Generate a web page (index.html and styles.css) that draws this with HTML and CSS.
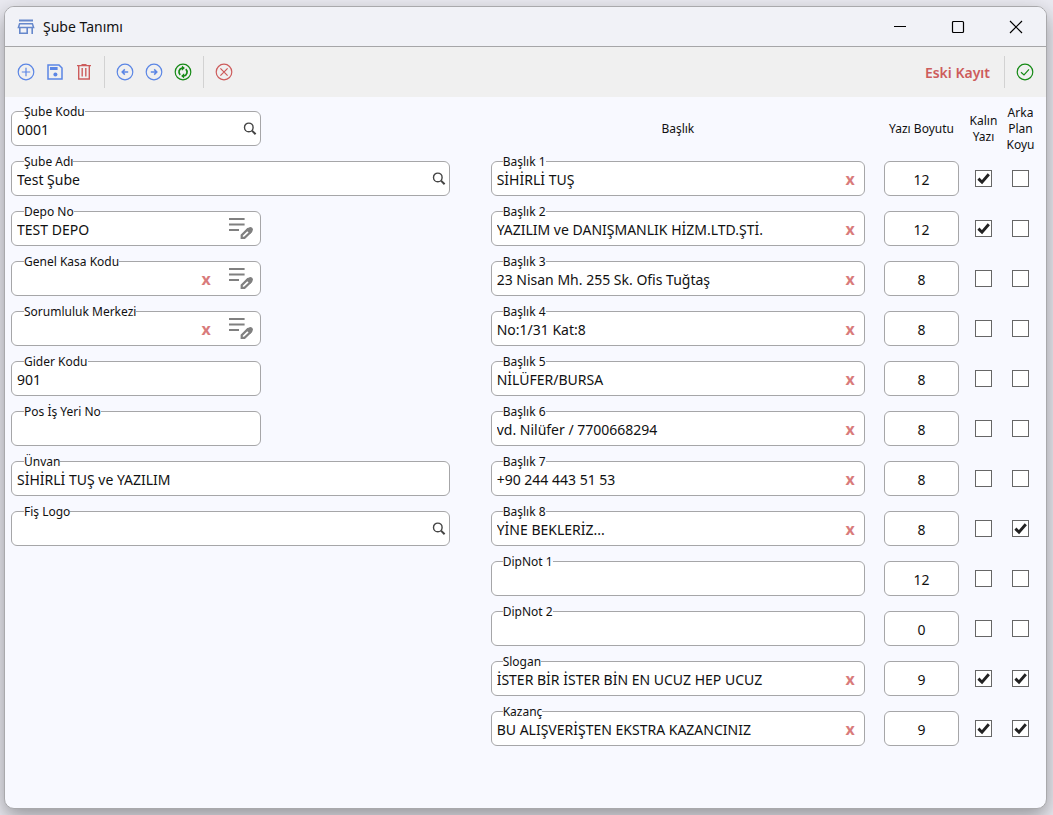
FILE: index.html
```html
<!DOCTYPE html>
<html lang="tr">
<head>
    <meta charset="UTF-8">
    <meta name="viewport" content="width=device-width, initial-scale=1.0">
    <title>Şube Tanımı</title>
    <link rel="stylesheet" href="styles.css">
</head>
<body>
    <svg class="icon-defs" aria-hidden="true">
        <symbol id="icon-search" viewBox="0 0 14 14">
            <circle cx="5.8" cy="5.4" r="4.3" fill="none" stroke="currentColor" stroke-width="1.4"/>
            <path d="M9 8.6L12.6 12.2" fill="none" stroke="currentColor" stroke-width="2"/>
        </symbol>
        <symbol id="icon-edit" viewBox="0 0 26 24">
            <path d="M1 2H16.6M1 7.5H16.6M1 13H11" fill="none" stroke="currentColor" stroke-width="2"/>
            <path d="M13.7 20.9V18.2L19.6 12.4L22.4 15.2L16.5 20.9Z" fill="none" stroke="currentColor" stroke-width="2.2"/>
            <path d="M17.8 12.6L20.8 10.4Q22.4 9.4 23.8 10.4L24.4 11Q25.6 12.6 24.4 14.2L22 17Z" fill="currentColor"/>
        </symbol>
    </svg>

    <div class="window">
        <header class="titlebar">
            <svg class="app-icon" width="18" height="16" viewBox="0 0 18 16" fill="none" stroke="currentColor">
                <path d="M2 1.5H16" stroke-width="2"/>
                <path d="M2.6 4.8H15.4L16.6 8.6H1.4Z" stroke-width="1.5"/>
                <path d="M2.8 8.6V14.2H10.2V8.6M15.2 8.6V15" stroke-width="1.6"/>
            </svg>
            <h1>Şube Tanımı</h1>
            <div class="window-buttons">
                <button type="button" aria-label="Simge durumuna küçült">
                    <svg width="14" height="14" viewBox="0 0 14 14"><path d="M1 6.5H13"/></svg>
                </button>
                <button type="button" aria-label="Ekranı kapla">
                    <svg width="14" height="14" viewBox="0 0 14 14"><rect x="1.5" y="1.5" width="11" height="11" rx="1"/></svg>
                </button>
                <button type="button" aria-label="Kapat">
                    <svg width="14" height="14" viewBox="0 0 14 14"><path d="M1 1L13 13M13 1L1 13"/></svg>
                </button>
            </div>
        </header>

        <div class="toolbar">
            <button type="button" class="tool blue" aria-label="Yeni">
                <svg viewBox="0 0 18 18"><circle cx="9" cy="9" r="7.8"/><path d="M9 4.8V13.2M4.8 9H13.2"/></svg>
            </button>
            <button type="button" class="tool blue" aria-label="Kaydet">
                <svg viewBox="0 0 18 18"><path d="M2 2H13L16 5V16H2Z" stroke-width="1.5"/><path d="M4 5.6H11.6" stroke-width="3"/><circle cx="9.4" cy="11.6" r="2" fill="currentColor" stroke="none"/></svg>
            </button>
            <button type="button" class="tool red" aria-label="Sil">
                <svg viewBox="0 0 18 18"><path d="M2 2.6H16M6.5 1.6H11.5M3.7 2.6V16H14.3V2.6M7.2 5V13.4M10.8 5V13.4" stroke-width="1.4"/></svg>
            </button>
            <span class="separator"></span>
            <button type="button" class="tool blue" aria-label="Önceki">
                <svg viewBox="0 0 18 18"><circle cx="9" cy="9" r="7.8"/><path d="M12.2 9H6.6M8.8 6.4L6.2 9L8.8 11.6" stroke-width="1.5"/></svg>
            </button>
            <button type="button" class="tool blue" aria-label="Sonraki">
                <svg viewBox="0 0 18 18"><circle cx="9" cy="9" r="7.8"/><path d="M5.8 9H11.4M9.2 6.4L11.8 9L9.2 11.6" stroke-width="1.5"/></svg>
            </button>
            <button type="button" class="tool green" aria-label="Yenile">
                <svg viewBox="0 0 18 18"><circle cx="9" cy="9" r="7.8"/><path d="M8.6 5.1H8.2A3.9 3.9 0 0 0 6.2 11.8M9.4 12.9H9.8A3.9 3.9 0 0 0 11.8 6.2" stroke-width="1.7"/><path d="M7.9 2.4L10.9 5.1L7.9 7.8ZM10.1 10.2L7.1 12.9L10.1 15.6Z" fill="currentColor" stroke="none"/></svg>
            </button>
            <span class="separator"></span>
            <button type="button" class="tool red" aria-label="İptal">
                <svg viewBox="0 0 18 18"><circle cx="9" cy="9" r="7.8"/><path d="M5.4 5.4L12.6 12.6M12.6 5.4L5.4 12.6"/></svg>
            </button>
            <strong class="record-status">Eski Kayıt</strong>
            <span class="separator"></span>
            <button type="button" class="tool green" aria-label="Onayla">
                <svg viewBox="0 0 18 18"><circle cx="9" cy="9" r="7.8"/><path d="M5 9.2L8 12L13 6.4"/></svg>
            </button>
        </div>

        <form class="content">
            <div class="branch-fields">
                <div class="field short">
                    <label for="subeKodu">Şube Kodu</label>
                    <input type="text" id="subeKodu" value="0001">
                    <button type="button" class="search" aria-label="Şube kodu ara"><svg><use href="#icon-search"/></svg></button>
                </div>
                <div class="field">
                    <label for="subeAdi">Şube Adı</label>
                    <input type="text" id="subeAdi" value="Test Şube">
                    <button type="button" class="search" aria-label="Şube adı ara"><svg><use href="#icon-search"/></svg></button>
                </div>
                <div class="field short">
                    <label for="depoNo">Depo No</label>
                    <input type="text" id="depoNo" value="TEST DEPO">
                    <button type="button" class="edit" aria-label="Depo seç"><svg><use href="#icon-edit"/></svg></button>
                </div>
                <div class="field short">
                    <label for="kasaKodu">Genel Kasa Kodu</label>
                    <input type="text" id="kasaKodu">
                    <button type="button" class="clear">x</button>
                    <button type="button" class="edit" aria-label="Kasa seç"><svg><use href="#icon-edit"/></svg></button>
                </div>
                <div class="field short">
                    <label for="sorumluluk">Sorumluluk Merkezi</label>
                    <input type="text" id="sorumluluk">
                    <button type="button" class="clear">x</button>
                    <button type="button" class="edit" aria-label="Sorumluluk merkezi seç"><svg><use href="#icon-edit"/></svg></button>
                </div>
                <div class="field short">
                    <label for="giderKodu">Gider Kodu</label>
                    <input type="text" id="giderKodu" value="901">
                </div>
                <div class="field short">
                    <label for="posNo">Pos İş Yeri No</label>
                    <input type="text" id="posNo">
                </div>
                <div class="field">
                    <label for="unvan">Ünvan</label>
                    <input type="text" id="unvan" value="SİHİRLİ TUŞ ve YAZILIM">
                </div>
                <div class="field">
                    <label for="fisLogo">Fiş Logo</label>
                    <input type="text" id="fisLogo">
                    <button type="button" class="search" aria-label="Logo ara"><svg><use href="#icon-search"/></svg></button>
                </div>
            </div>

            <table class="receipt-lines">
                <thead>
                    <tr>
                        <th class="col-title">Başlık</th>
                        <th class="col-size">Yazı Boyutu</th>
                        <th class="col-check">Kalın Yazı</th>
                        <th class="col-check">Arka Plan Koyu</th>
                    </tr>
                </thead>
                <tbody>
                    <tr>
                        <td><div class="field"><label for="baslik1">Başlık 1</label><input type="text" id="baslik1" value="SİHİRLİ TUŞ"><button type="button" class="clear">x</button></div></td>
                        <td class="size"><input type="text" value="12" aria-label="Başlık 1 yazı boyutu"></td>
                        <td class="check"><input type="checkbox" aria-label="Başlık 1 kalın" checked></td>
                        <td class="check"><input type="checkbox" aria-label="Başlık 1 koyu"></td>
                    </tr>
                    <tr>
                        <td><div class="field"><label for="baslik2">Başlık 2</label><input type="text" id="baslik2" value="YAZILIM ve DANIŞMANLIK HİZM.LTD.ŞTİ."><button type="button" class="clear">x</button></div></td>
                        <td class="size"><input type="text" value="12" aria-label="Başlık 2 yazı boyutu"></td>
                        <td class="check"><input type="checkbox" aria-label="Başlık 2 kalın" checked></td>
                        <td class="check"><input type="checkbox" aria-label="Başlık 2 koyu"></td>
                    </tr>
                    <tr>
                        <td><div class="field"><label for="baslik3">Başlık 3</label><input type="text" id="baslik3" value="23 Nisan Mh. 255 Sk. Ofis Tuğtaş"><button type="button" class="clear">x</button></div></td>
                        <td class="size"><input type="text" value="8" aria-label="Başlık 3 yazı boyutu"></td>
                        <td class="check"><input type="checkbox" aria-label="Başlık 3 kalın"></td>
                        <td class="check"><input type="checkbox" aria-label="Başlık 3 koyu"></td>
                    </tr>
                    <tr>
                        <td><div class="field"><label for="baslik4">Başlık 4</label><input type="text" id="baslik4" value="No:1/31 Kat:8"><button type="button" class="clear">x</button></div></td>
                        <td class="size"><input type="text" value="8" aria-label="Başlık 4 yazı boyutu"></td>
                        <td class="check"><input type="checkbox" aria-label="Başlık 4 kalın"></td>
                        <td class="check"><input type="checkbox" aria-label="Başlık 4 koyu"></td>
                    </tr>
                    <tr>
                        <td><div class="field"><label for="baslik5">Başlık 5</label><input type="text" id="baslik5" value="NİLÜFER/BURSA"><button type="button" class="clear">x</button></div></td>
                        <td class="size"><input type="text" value="8" aria-label="Başlık 5 yazı boyutu"></td>
                        <td class="check"><input type="checkbox" aria-label="Başlık 5 kalın"></td>
                        <td class="check"><input type="checkbox" aria-label="Başlık 5 koyu"></td>
                    </tr>
                    <tr>
                        <td><div class="field"><label for="baslik6">Başlık 6</label><input type="text" id="baslik6" value="vd. Nilüfer / 7700668294"><button type="button" class="clear">x</button></div></td>
                        <td class="size"><input type="text" value="8" aria-label="Başlık 6 yazı boyutu"></td>
                        <td class="check"><input type="checkbox" aria-label="Başlık 6 kalın"></td>
                        <td class="check"><input type="checkbox" aria-label="Başlık 6 koyu"></td>
                    </tr>
                    <tr>
                        <td><div class="field"><label for="baslik7">Başlık 7</label><input type="text" id="baslik7" value="+90 244 443 51 53"><button type="button" class="clear">x</button></div></td>
                        <td class="size"><input type="text" value="8" aria-label="Başlık 7 yazı boyutu"></td>
                        <td class="check"><input type="checkbox" aria-label="Başlık 7 kalın"></td>
                        <td class="check"><input type="checkbox" aria-label="Başlık 7 koyu"></td>
                    </tr>
                    <tr>
                        <td><div class="field"><label for="baslik8">Başlık 8</label><input type="text" id="baslik8" value="YİNE BEKLERİZ..."><button type="button" class="clear">x</button></div></td>
                        <td class="size"><input type="text" value="8" aria-label="Başlık 8 yazı boyutu"></td>
                        <td class="check"><input type="checkbox" aria-label="Başlık 8 kalın"></td>
                        <td class="check"><input type="checkbox" aria-label="Başlık 8 koyu" checked></td>
                    </tr>
                    <tr>
                        <td><div class="field"><label for="dipnot1">DipNot 1</label><input type="text" id="dipnot1"></div></td>
                        <td class="size"><input type="text" value="12" aria-label="DipNot 1 yazı boyutu"></td>
                        <td class="check"><input type="checkbox" aria-label="DipNot 1 kalın"></td>
                        <td class="check"><input type="checkbox" aria-label="DipNot 1 koyu"></td>
                    </tr>
                    <tr>
                        <td><div class="field"><label for="dipnot2">DipNot 2</label><input type="text" id="dipnot2"></div></td>
                        <td class="size"><input type="text" value="0" aria-label="DipNot 2 yazı boyutu"></td>
                        <td class="check"><input type="checkbox" aria-label="DipNot 2 kalın"></td>
                        <td class="check"><input type="checkbox" aria-label="DipNot 2 koyu"></td>
                    </tr>
                    <tr>
                        <td><div class="field"><label for="slogan">Slogan</label><input type="text" id="slogan" value="İSTER BİR İSTER BİN EN UCUZ HEP UCUZ"><button type="button" class="clear">x</button></div></td>
                        <td class="size"><input type="text" value="9" aria-label="Slogan yazı boyutu"></td>
                        <td class="check"><input type="checkbox" aria-label="Slogan kalın" checked></td>
                        <td class="check"><input type="checkbox" aria-label="Slogan koyu" checked></td>
                    </tr>
                    <tr>
                        <td><div class="field"><label for="kazanc">Kazanç</label><input type="text" id="kazanc" value="BU ALIŞVERİŞTEN EKSTRA KAZANCINIZ"><button type="button" class="clear">x</button></div></td>
                        <td class="size"><input type="text" value="9" aria-label="Kazanç yazı boyutu"></td>
                        <td class="check"><input type="checkbox" aria-label="Kazanç kalın" checked></td>
                        <td class="check"><input type="checkbox" aria-label="Kazanç koyu" checked></td>
                    </tr>
                </tbody>
            </table>
        </form>
    </div>
</body>
</html>
```
FILE: styles.css
```css
:root {
    --blue: #5B86E5;
    --red: #CD5C5C;
    --green: #168A16;
    --text-color: #111111;
    --page: #F8F9FF;
    --border-color: #A6A6A8;
    --radius: 6px;
}

* {
    margin: 0;
    padding: 0;
    box-sizing: border-box;
}

body {
    min-height: 100vh;
    padding: 6px 6px 6px 4px;
    display: flex;
    background: #EAEAF1;
    color: var(--text-color);
    font-family: 'Noto Sans', 'Segoe UI', sans-serif;
    font-size: 14px;
}

button {
    border: none;
    background: none;
    font-family: inherit;
    cursor: pointer;
}

.icon-defs {
    display: none;
}

.window {
    flex: 1;
    min-width: 0;
    overflow: hidden;
    background: var(--page);
    border: 1px solid #A9A9AC;
    border-radius: 10px;
    box-shadow: 0 8px 20px rgba(0, 0, 0, 0.36);
}

/* Title bar */
.titlebar {
    height: 40px;
    padding: 0 1px 0 12px;
    display: flex;
    align-items: center;
    gap: 8px;
    background: #F1F2F7;
    border-bottom: 1px solid #A6A6A8;
}

.titlebar h1 {
    flex: 1;
    font-size: 14px;
    font-weight: 400;
}

.app-icon {
    color: #6688CC;
}

.window-buttons {
    display: flex;
}

.window-buttons button {
    width: 58px;
    height: 38px;
    display: grid;
    place-items: center;
}

.window-buttons svg {
    fill: none;
    stroke: #000;
    stroke-width: 1.2;
}

/* Toolbar */
.toolbar {
    height: 50px;
    padding: 0 12px;
    display: flex;
    align-items: center;
    gap: 11px;
    background: #F0F0F0;
}

.tool,
.tool svg {
    display: block;
    width: 18px;
    height: 18px;
}

.tool svg {
    fill: none;
    stroke: currentColor;
    stroke-width: 1.2;
}

.blue {
    color: var(--blue);
}

.red {
    color: var(--red);
}

.green {
    color: var(--green);
}

.separator {
    width: 1px;
    height: 32px;
    background: #D2D2D2;
}

.record-status {
    margin-left: auto;
    padding-right: 3px;
    color: var(--red);
    font-weight: 600;
}

/* Form */
.content {
    padding: 0 7px 55px 6px;
    display: grid;
    grid-template-columns: minmax(0, 4fr) minmax(0, 5fr);
    column-gap: 41px;
    align-items: start;
}

.branch-fields {
    padding-top: 14px;
    display: flex;
    flex-direction: column;
    gap: 15px;
}

.field {
    position: relative;
    height: 35px;
    display: flex;
    align-items: center;
    background: #FFF;
    border: 1px solid var(--border-color);
    border-radius: var(--radius);
}

.field.short {
    width: 57%;
}

/* caption sits on the top border of the box */
.field label {
    position: absolute;
    top: -9px;
    left: 12px;
    line-height: 17px;
    font-size: 12px;
    background: linear-gradient(var(--page) 9px, #FFF 9px);
}

.receipt-lines .field label {
    left: 11px;
}

.field input {
    flex: 1;
    min-width: 0;
    height: 33px;
    padding: 1px 0 0 5px;
}

input[type="text"] {
    border: none;
    outline: none;
    background: transparent;
    color: inherit;
    font-family: inherit;
    font-size: 14px;
}

.search {
    width: 14px;
    height: 14px;
    margin-right: 3px;
    color: #444;
}

.edit {
    width: 26px;
    height: 24px;
    margin-right: 6px;
    color: #808080;
}

.search svg,
.edit svg {
    display: block;
    width: 100%;
    height: 100%;
}

.clear {
    width: 28px;
    height: 33px;
    color: #D97B7B;
    font-size: 16px;
    font-weight: 700;
    line-height: 32px;
}

.clear + .edit {
    margin-left: 8px;
}

/* Receipt header and footer lines */
.receipt-lines {
    width: 100%;
    table-layout: fixed;
    border-collapse: collapse;
}

.receipt-lines th {
    height: 56px;
    padding-top: 8px;
    font-size: 12px;
    font-weight: 400;
    line-height: 16px;
}

.receipt-lines td {
    height: 50px;
    padding: 8px 0 7px;
    vertical-align: top;
}

.receipt-lines .col-size {
    width: 100px;
    padding-left: 13px;
}

.col-check {
    width: 37px;
}

.receipt-lines .size {
    padding-left: 19px;
    padding-right: 6px;
}

.size input {
    display: block;
    width: 100%;
    height: 35px;
    padding-top: 1px;
    text-align: center;
    background: #FFF;
    border: 1px solid var(--border-color);
    border-radius: var(--radius);
}

.receipt-lines .check {
    padding: 17px 0 0;
}

.check input {
    appearance: none;
    display: block;
    width: 17px;
    height: 17px;
    margin: 0 auto;
    background: #FFF;
    border: 1px solid #666;
}

.check input:checked {
    background: #FFF url("data:image/svg+xml,%3Csvg xmlns='http://www.w3.org/2000/svg' viewBox='0 0 15 15'%3E%3Cpath d='M2.4 7.6L6 11.2L12.8 3.2' fill='none' stroke='%23222' stroke-width='2.9'/%3E%3C/svg%3E") center / 15px 15px no-repeat;
}
```
